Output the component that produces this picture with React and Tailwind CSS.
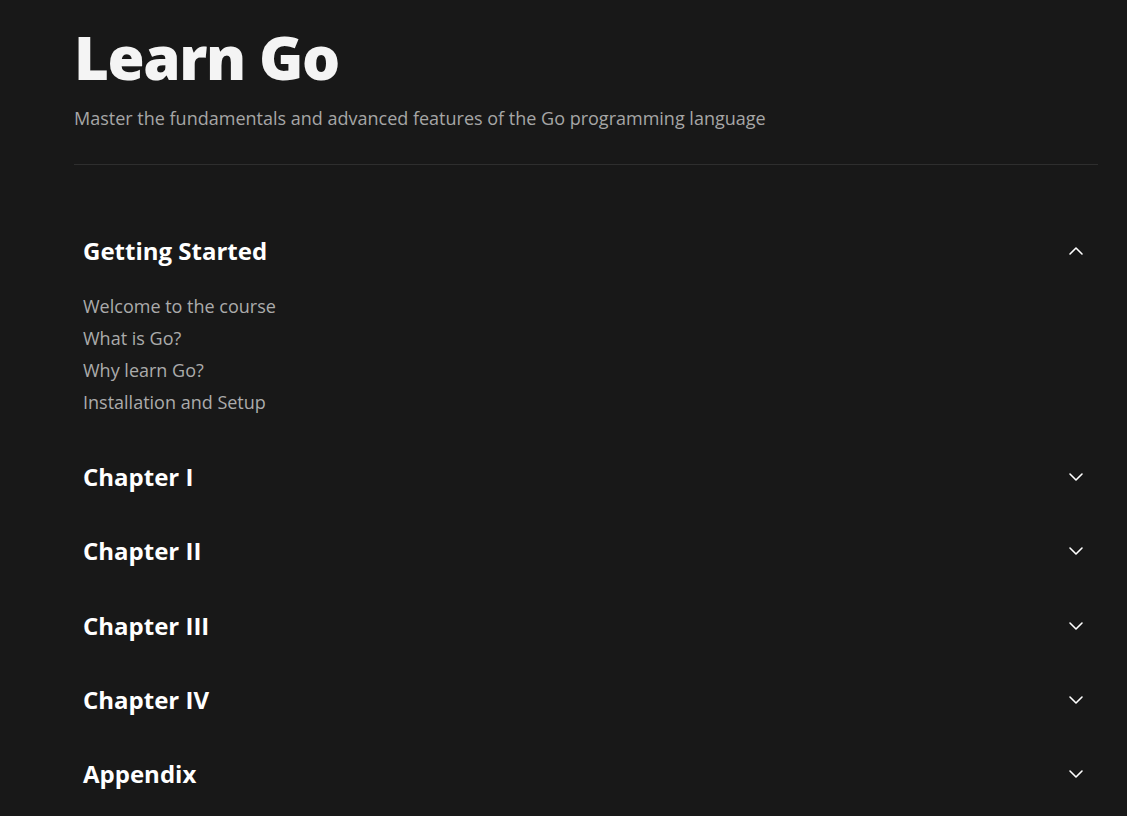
import { ChevronDown, ChevronUp } from 'lucide-react';

const SECTIONS = [
  {
    key: 'start',
    title: 'Getting Started',
    open: true,
    lessons: ['Welcome to the course', 'What is Go?', 'Why learn Go?', 'Installation and Setup'],
  },
  { key: 'ch1', title: 'Chapter I' },
  { key: 'ch2', title: 'Chapter II' },
  { key: 'ch3', title: 'Chapter III' },
  { key: 'ch4', title: 'Chapter IV' },
  { key: 'appendix', title: 'Appendix' },
];

function Section({ section }) {
  const Icon = section.open ? ChevronUp : ChevronDown;
  return (
    <div>
      <button
        type="button"
        className="flex w-full items-center justify-between py-[21.1px] pr-[10px] pl-[9px] text-left"
      >
        <span className="text-2xl leading-8 font-bold text-white">{section.title}</span>
        <Icon className="h-6 w-6 text-white" strokeWidth={1.6} aria-hidden />
      </button>
      {section.open ? (
        <ul className="pt-[2px] pb-[22px] pl-[9px]">
          {section.lessons.map((lesson) => (
            <li key={lesson} className="text-lg leading-8 text-[#ababab]">
              {lesson}
            </li>
          ))}
        </ul>
      ) : null}
    </div>
  );
}

export default function App() {
  return (
    <div
      className="min-h-screen bg-[#181818]"
      style={{ fontFamily: '"Open Sans", sans-serif' }}
    >
      <div className="ml-[74px] w-[1024px] pt-[27px]">
        <header className="border-b border-[#2e2e2e] pb-8">
          <h1 className="text-6xl leading-none font-extrabold tracking-[-1.4px] text-[#f4f4f4]">
            Learn Go
          </h1>
          <p className="mt-[17px] text-lg leading-7 text-[#a6a6a6]">
            Master the fundamentals and advanced features of the Go programming language
          </p>
        </header>

        <div className="mt-[49px]">
          {SECTIONS.map((section) => (
            <Section key={section.key} section={section} />
          ))}
        </div>
      </div>
    </div>
  );
}
